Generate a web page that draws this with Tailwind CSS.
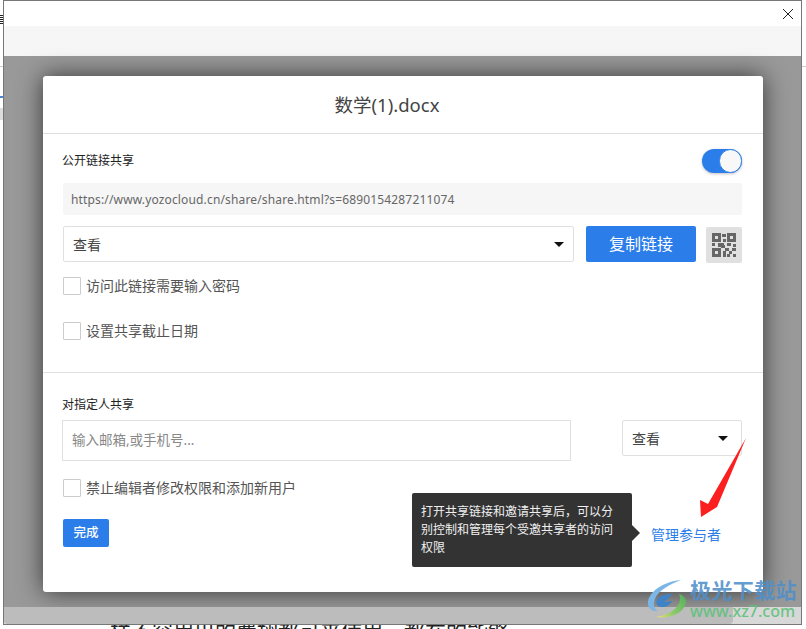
<!DOCTYPE html>
<html lang="zh-CN">

<head>
    <meta charset="UTF-8">
    <title>数学(1).docx</title>
    <script src="https://cdn.jsdelivr.net/npm/@tailwindcss/browser@4"></script>
</head>

<body class="relative w-[806px] h-[629px] overflow-hidden bg-white font-['Noto_Sans','Noto_Sans_CJK_SC',sans-serif]">
    <!-- clipped document text behind the window -->
    <div class="absolute left-[110px] top-[616px] text-[21px] leading-[28px] text-[#222] whitespace-nowrap font-['Noto_Sans_CJK_SC',sans-serif]">样不容用出的费翔都可来使用，都在的能够</div>
    <div class="absolute left-0 top-[15px] w-[3px] flex flex-col gap-px">
        <div class="h-px bg-[#222]"></div>
        <div class="h-px bg-[#222]"></div>
        <div class="h-px bg-[#222]"></div>
        <div class="h-px bg-[#222]"></div>
        <div class="h-px bg-[#222]"></div>
    </div>
    <div class="absolute left-0 top-[96px] w-[3px] h-[2px] bg-[#4a86d8]"></div>
    <div class="absolute left-0 top-[108px] w-[3px] h-[12px] bg-[#dcdcdc]"></div>
    <div class="absolute left-0 top-[66px] w-[3px] h-px bg-[#ccc]"></div>
    <div class="absolute left-[802px] top-[66px] w-[4px] h-px bg-[#ccc]"></div>

    <div class="relative ml-[3px] w-[799px] h-[625px] flex flex-col border border-[#777] bg-white">
        <div class="h-[25px] shrink-0 flex justify-end items-start pt-[7px] pr-[7px]">
            <svg width="12" height="12" viewBox="0 0 12 12" fill="none" stroke="#222" stroke-width="1"><path d="M1 1l10 10M11 1L1 11" /></svg>
        </div>
        <div class="h-[30px] shrink-0 bg-[#f6f6f6]"></div>

        <div class="h-[551px] shrink-0 bg-[#999] pt-[20px] pl-[39px]">
            <div class="w-[720px] h-[516px] bg-white rounded-[3px] shadow-[0_0_24px_rgba(0,0,0,0.65)] flex flex-col">
                <div class="h-[58px] shrink-0 pr-[32px] flex items-center justify-center border-b border-[#e0e0e0] text-[18.5px] text-[#444]">数学(1).docx</div>

                <div class="pl-[20px] pr-[21px]">
                    <div class="mt-[15px] h-[24px] flex items-center justify-between">
                        <span class="-ml-px text-[12px] text-[#222]">公开链接共享</span>
                        <div class="w-[40px] h-[24px] rounded-full bg-[#2b7de9] flex justify-end shadow-[0_1px_3px_rgba(0,0,0,0.25)]">
                            <div class="w-[23px] h-[24px] rounded-full bg-[#f8f8f8] border border-[#2b7de9]"></div>
                        </div>
                    </div>

                    <div class="mt-[10px] h-[32px] rounded-[2px] bg-[#f6f6f6] pl-[8px] pt-px flex items-center text-[12px] tracking-[0.15px] text-[#666]">https://www.yozocloud.cn/share/share.html?s=6890154287211074</div>

                    <div class="mt-[11px] flex items-start">
                        <div class="w-[511px] h-[36px] rounded-[2px] border border-[#e0e0e0] pl-[9px] pr-[9px] flex items-center justify-between text-[14px] text-[#444]">
                            <span>查看</span>
                            <span class="w-0 h-0 border-x-[5px] border-x-transparent border-t-[5px] border-t-[#111]"></span>
                        </div>
                        <button class="ml-[12px] w-[110px] h-[36px] rounded-[2px] bg-[#2b7de9] text-[16px] text-white">复制链接</button>
                        <div class="ml-[10px] mt-px w-[36px] h-[36px] rounded-[2px] bg-[#e0e0e0] flex items-center justify-center">
                            <svg width="24" height="24" viewBox="0 0 24 24" fill="#666">
                                <path d="M0 0h9v9H0zM3 3v3h3V3zM15 0h9v9H15zM18 3v3h3V3z" fill-rule="evenodd" />
                                <path d="M0 15h9v9H0zM3 18v3h3v-3z" fill-rule="evenodd" />
                                <path d="M10 1h4v3h-4zM11 6h3v3h-3zM0 10h3v3H0zM6 10h6v4H6zM9 12h4v3H9zM15 10h4v3h-4zM21 11h3v3h-3zM13 15h4v3h-4zM20 15h4v3h-4zM11 18h3v6h-3zM17 18h3v3h-3zM21 21h3v3h-3zM15 21h3v3h-3z" />
                            </svg>
                        </div>
                    </div>

                    <label class="mt-[14px] h-[18px] flex items-center gap-[5px] text-[14px] leading-[18px] text-[#555]">
                        <span class="w-[18px] h-[18px] border border-[#ccc] rounded-[1px]"></span>访问此链接需要输入密码
                    </label>
                    <label class="mt-[27px] h-[18px] flex items-center gap-[5px] text-[14px] leading-[18px] text-[#555]">
                        <span class="w-[18px] h-[18px] border border-[#ccc] rounded-[1px]"></span>设置共享截止日期
                    </label>
                </div>

                <div class="mt-[32px] h-px bg-[#e0e0e0]"></div>

                <div class="pl-[20px] pr-[21px]">
                    <div class="mt-[24px] -ml-px h-[16px] leading-[16px] text-[12px] text-[#222]">对指定人共享</div>

                    <div class="mt-[7px] flex items-start justify-between">
                        <div class="-ml-px w-[509px] h-[41px] border border-[#e0e0e0] pl-[9px] flex items-center text-[13.5px] text-[#888]">输入邮箱,或手机号...</div>
                        <div class="w-[120px] h-[36px] rounded-[2px] border border-[#e0e0e0] pl-[9px] pr-[13px] flex items-center justify-between text-[14px] text-[#444]">
                            <span>查看</span>
                            <span class="w-0 h-0 border-x-[5px] border-x-transparent border-t-[5px] border-t-[#111]"></span>
                        </div>
                    </div>

                    <label class="mt-[18px] h-[18px] flex items-center gap-[5px] text-[14px] leading-[18px] text-[#555]">
                        <span class="w-[18px] h-[18px] border border-[#ccc] rounded-[1px]"></span>禁止编辑者修改权限和添加新用户
                    </label>

                    <div class="relative mt-[22px] flex items-center justify-between pr-[21px]">
                        <button class="w-[46px] h-[28px] rounded-[2px] bg-[#2b7de9] text-[12.5px] font-medium text-white">完成</button>
                        <a class="mt-[2px] text-[14px] text-[#2b7de9]">管理参与者</a>

                        <div class="absolute left-[349px] top-[-26px] w-[220px] h-[74px] rounded-[2px] bg-[#333] pl-[9px] pr-[17px] pt-[10px] text-[12px] leading-[18px] text-[#f0f0f0]">
                            打开共享链接和邀请共享后，可以分别控制和管理每个受邀共享者的访问权限
                            <span class="absolute left-full top-[32px] w-0 h-0 border-y-[8px] border-y-transparent border-l-[8px] border-l-[#333]"></span>
                        </div>
                    </div>
                </div>
            </div>
        </div>

        <div class="flex-1 bg-[#d8d8d8]">
            <div class="w-[729px] h-full bg-[#bcbcbc] rounded-b-[4px]"></div>
        </div>
    </div>

    <!-- red annotation arrow -->
    <svg class="absolute left-[690px] top-[430px]" width="66" height="95" viewBox="690 430 66 95">
        <path d="M746 438L717 507L701 517L700 500L708 504Z" fill="#fb1f1f" />
    </svg>

    <!-- watermark -->
    <svg class="absolute left-[645px] top-[576px]" width="50" height="46" viewBox="0 0 50 46" fill="none">
        <defs>
            <linearGradient id="swoosh" x1="40" y1="16" x2="12" y2="40" gradientUnits="userSpaceOnUse">
                <stop offset="0" stop-color="#4fae5a" />
                <stop offset="0.6" stop-color="#8cc96a" />
                <stop offset="1" stop-color="#e0e070" />
            </linearGradient>
        </defs>
        <path d="M36 4C22 5 6 13 3 25C2 32 7 36 13 35C6 32 8 19 20 12C26 8 31 6 36 4Z" fill="#7cb6e6" />
        <path d="M27 18C16 17 9 24 12 29C15 33 25 31 27 25L19 26C22 24 25 21 27 18Z" fill="#3f83c6" />
        <path d="M34 18C38 27 30 38 11 41C24 43 38 38 41 27C42 23 38 19 34 18Z" fill="url(#swoosh)" />
    </svg>
    <div class="absolute left-[690px] top-[575px] text-[21px] leading-[28px] font-bold tracking-[0.4px] text-[#4f8fca]/90 font-['Noto_Sans_CJK_SC',sans-serif]">极光下载站</div>
    <div class="absolute left-[690px] top-[601px] text-[16px] leading-[20px] font-medium text-[#5cc07a]/90">www.xz7.com</div>
</body>

</html>
